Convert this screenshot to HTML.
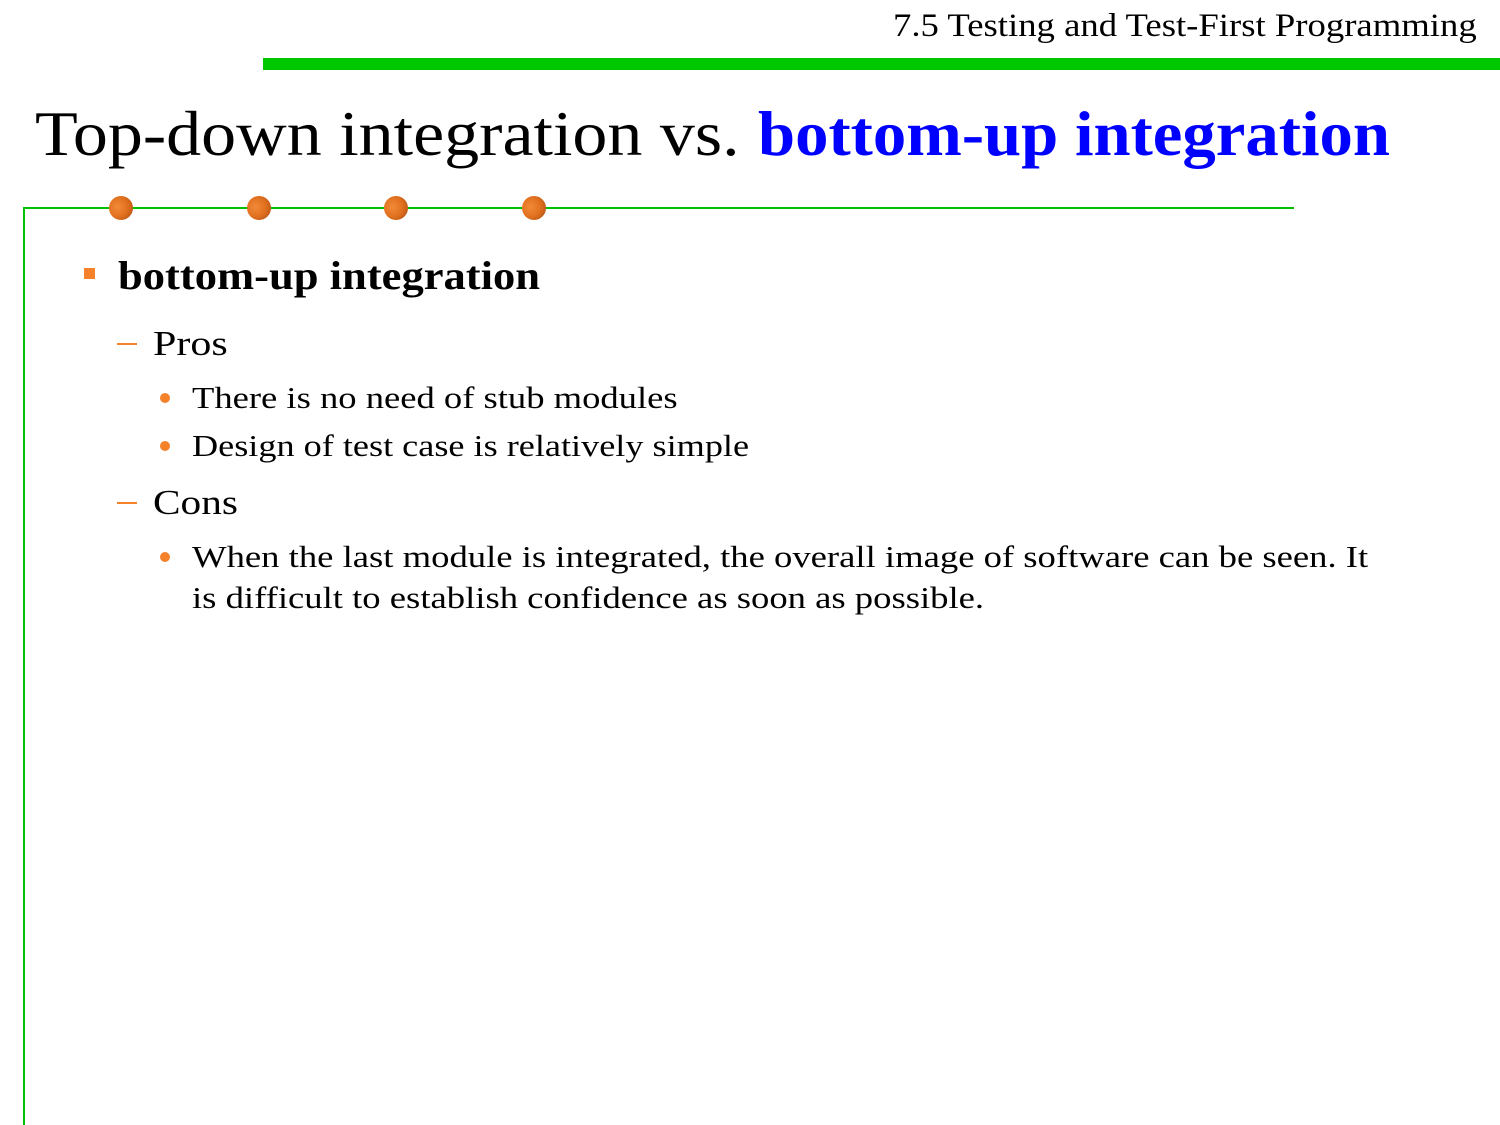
<!DOCTYPE html>
<html><head><style>
body{margin:0;width:1500px;height:1125px;background:#fff;position:relative;overflow:hidden;font-family:"Liberation Serif",serif;color:#000}
.a{position:absolute;white-space:nowrap;line-height:1;transform-origin:0 0}
.dot{position:absolute;width:24px;height:24px;border-radius:50%;background:radial-gradient(circle at 35% 45%,#f28a3a 0%,#e0701e 50%,#a84a10 100%);top:196px}
.b{position:absolute;width:10px;height:10px;border-radius:50%;background:#f5822a}
.d{position:absolute;width:20px;height:2px;background:#f5822a}
</style></head><body>
<div class="a" style="left:893px;top:10px;font-size:33px;transform:scaleX(1.112)">7.5 Testing and Test-First Programming</div>
<div style="position:absolute;left:263px;top:58px;width:1237px;height:12px;background:#00c800"></div>
<div class="a" style="left:35px;top:103px;font-size:63px;transform:scaleX(1.111)">Top-down integration vs.</div>
<div class="a" style="left:758px;top:103px;font-size:63px;transform:scaleX(1.059);font-weight:bold;color:#0000ff">bottom-up integration</div>
<div style="position:absolute;left:23px;top:207px;width:1271px;height:2px;background:#00c000"></div>
<div style="position:absolute;left:23px;top:207px;width:2px;height:918px;background:#00c000"></div>
<div class="dot" style="left:109px"></div>
<div class="dot" style="left:247px"></div>
<div class="dot" style="left:384px"></div>
<div class="dot" style="left:522px"></div>
<div style="position:absolute;left:84px;top:268px;width:11px;height:11px;background:#f5822a"></div>
<div class="a" style="left:118px;top:256px;font-size:40px;font-weight:bold;transform:scaleX(1.114)">bottom-up integration</div>
<div class="d" style="left:117px;top:343px"></div>
<div class="a" style="left:153px;top:326px;font-size:35px;transform:scaleX(1.2)">Pros</div>
<div class="b" style="left:160px;top:393px"></div>
<div class="a" style="left:192px;top:382px;font-size:31px;transform:scaleX(1.18)">There is no need of stub modules</div>
<div class="b" style="left:160px;top:441px"></div>
<div class="a" style="left:192px;top:430px;font-size:31px;transform:scaleX(1.168)">Design of test case is relatively simple</div>
<div class="d" style="left:117px;top:502px"></div>
<div class="a" style="left:153px;top:485px;font-size:35px;transform:scaleX(1.18)">Cons</div>
<div class="b" style="left:160px;top:552px"></div>
<div class="a" style="left:192px;top:541px;font-size:31px;transform:scaleX(1.182)">When the last module is integrated, the overall image of software can be seen. It</div>
<div class="a" style="left:192px;top:582px;font-size:31px;transform:scaleX(1.182)">is difficult to establish confidence as soon as possible.</div>
</body></html>
